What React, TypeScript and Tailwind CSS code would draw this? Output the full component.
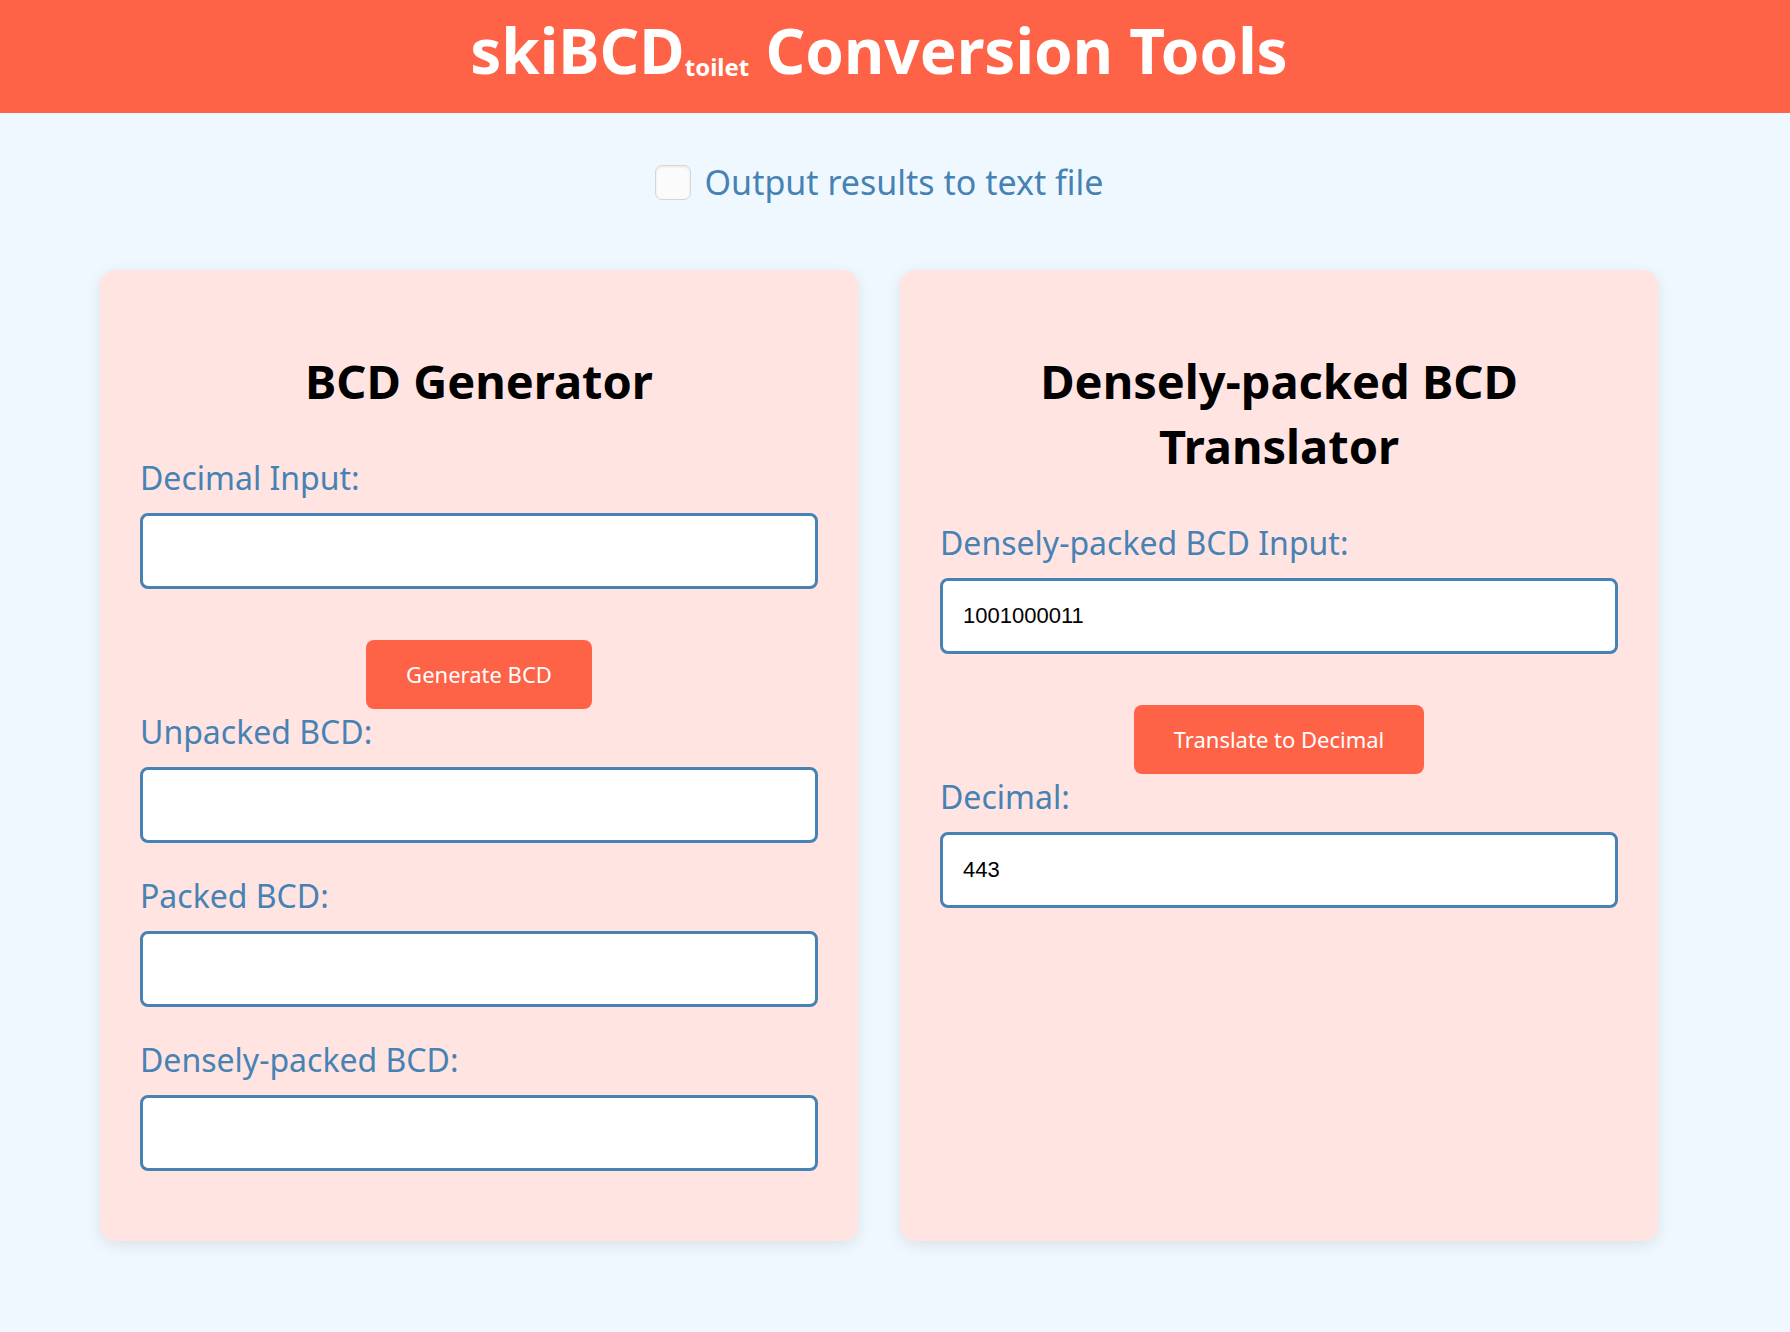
import {useState} from 'react';

const labelCls = 'mb-[17px] block text-[32px] leading-[36px] text-[#4682b4]';
const inputCls =
  'mb-[35px] block h-[76px] w-full rounded-[8px] border-[3px] border-[#4682b4] bg-white px-[20px] text-[22px] text-black outline-none [font-family:"Liberation_Sans",Arial,sans-serif]';
const buttonCls =
  'mx-auto mt-[16px] mb-[5px] block h-[69px] rounded-[8px] bg-[#ff6347] px-[40px] text-[22px] text-white';
const cardCls =
  'flex flex-col rounded-[15px] bg-[#ffe4e1] px-[40px] pt-[79px] pb-[35px] shadow-[0_4px_16px_rgba(0,0,0,0.09)]';
const headingCls = 'mb-[46px] text-center text-[47px] leading-[65px] font-bold text-black';

function Field({
  label,
  value,
  onChange,
}: {
  label: string;
  value: string;
  onChange?: (v: string) => void;
}) {
  return (
    <div>
      <label className={labelCls}>{label}</label>
      <input
        type="text"
        className={inputCls}
        value={value}
        readOnly={!onChange}
        onChange={(e) => onChange?.(e.target.value)}
      />
    </div>
  );
}

export default function App() {
  const [toFile, setToFile] = useState(false);
  const [decimal, setDecimal] = useState('');
  const [dpd, setDpd] = useState('1001000011');

  return (
    <div className="min-h-screen bg-[#f0f8ff] [font-family:'Comic_Sans_MS','Noto_Sans',sans-serif]">
      <header className="flex h-[113px] items-center justify-center bg-[#ff6347] pr-[32px] pb-[14px]">
        <h1 className="text-[62px] leading-none font-bold text-white">
          skiBCD
          <sub className="bottom-[-2px] text-[24px]">toilet</sub> Conversion Tools
        </h1>
      </header>

      <main className="pr-[132px] pb-[90px] pl-[100px]">
        <label className="mt-[51px] flex items-center justify-center gap-[14px]">
          <input
            type="checkbox"
            checked={toFile}
            onChange={(e) => setToFile(e.target.checked)}
            className="h-[35px] w-[36px] appearance-none rounded-[7px] border border-[#d6d6d6] bg-[#fbfbfb] shadow-[inset_0_1px_3px_rgba(0,0,0,0.08)] checked:bg-[#4682b4]"
          />
          <span className="text-[34px] leading-[36px] text-[#4682b4]">
            Output results to text file
          </span>
        </label>

        <div className="mt-[70px] grid grid-cols-2 gap-[42px]">
          <section className={cardCls}>
            <h2 className={headingCls}>BCD Generator</h2>
            <Field label="Decimal Input:" value={decimal} onChange={setDecimal} />
            <button className={buttonCls}>Generate BCD</button>
            <Field label="Unpacked BCD:" value="" />
            <Field label="Packed BCD:" value="" />
            <Field label="Densely-packed BCD:" value="" />
          </section>

          <section className={cardCls}>
            <h2 className={headingCls}>
              Densely-packed BCD
              <br />
              Translator
            </h2>
            <Field label="Densely-packed BCD Input:" value={dpd} onChange={setDpd} />
            <button className={buttonCls}>Translate to Decimal</button>
            <Field label="Decimal:" value="443" />
          </section>
        </div>
      </main>
    </div>
  );
}
